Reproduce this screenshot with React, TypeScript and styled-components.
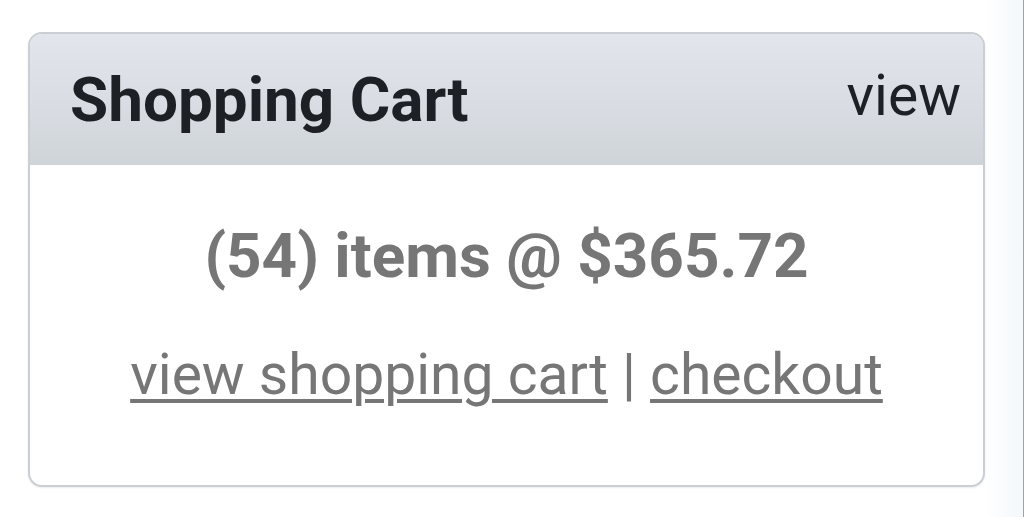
import React from "react";
import styled, { createGlobalStyle } from "styled-components";

const Global = createGlobalStyle`
  html, body { margin: 0; padding: 0; background: #ffffff; }
  body { font-family: Roboto, "Liberation Sans", sans-serif; width: 1024px; height: 517px; overflow: hidden; }
`;

const Page = styled.div`
  width: 1024px;
  height: 517px;
  box-sizing: border-box;
  padding: 32px 38px 0 28px;
  display: flex;
  align-items: flex-start;
  border-right: 1px solid #9aa4b4;
  background: linear-gradient(to right, #ffffff 0, #ffffff 985px, #f7fafc 1010px, #f3f8fb 1023px);
`;

const Card = styled.section`
  width: 958px;
  height: 455px;
  box-sizing: border-box;
  border: 2px solid #c9cfd2;
  border-radius: 14px;
  overflow: hidden;
  display: flex;
  flex-direction: column;
  background: #ffffff;
  box-shadow: 0 1px 2px rgba(0, 0, 0, 0.08);
`;

const Header = styled.header`
  height: 131px;
  flex: none;
  display: flex;
  align-items: center;
  justify-content: space-between;
  padding: 0 22px 0 40px;
  background: linear-gradient(to bottom, #e2e6ec 0%, #d9dde3 55%, #ced4d8 100%);
  color: #1d2024;
`;

const Title = styled.h2`
  margin: 0;
  font-size: 62px;
  font-weight: 700;
  letter-spacing: 0;
`;

const HeaderLink = styled.a`
  font-size: 57px;
  font-weight: 400;
  color: #1d2024;
  text-decoration: none;
  margin-top: -8px;
`;

const Body = styled.div`
  flex: 1;
  display: flex;
  flex-direction: column;
  align-items: center;
  padding-top: 54px;
  color: #767676;
`;

const Summary = styled.p`
  margin: 0;
  font-size: 62px;
  font-weight: 700;
  line-height: 1.2;
`;

const Links = styled.p`
  margin: 48px 0 0;
  font-size: 57px;
  font-weight: 400;
  line-height: 1.2;
`;

const Link = styled.a`
  color: #767676;
  text-decoration: underline;
  text-decoration-thickness: 4px;
  text-underline-offset: 5px;
`;

export default function App() {
  return (
    <>
      <Global />
      <Page>
        <Card>
          <Header>
            <Title>Shopping Cart</Title>
            <HeaderLink href="#">view</HeaderLink>
          </Header>
          <Body>
            <Summary>(54) items @ $365.72</Summary>
            <Links>
              <Link href="#">view shopping cart</Link> | <Link href="#">checkout</Link>
            </Links>
          </Body>
        </Card>
      </Page>
    </>
  );
}
